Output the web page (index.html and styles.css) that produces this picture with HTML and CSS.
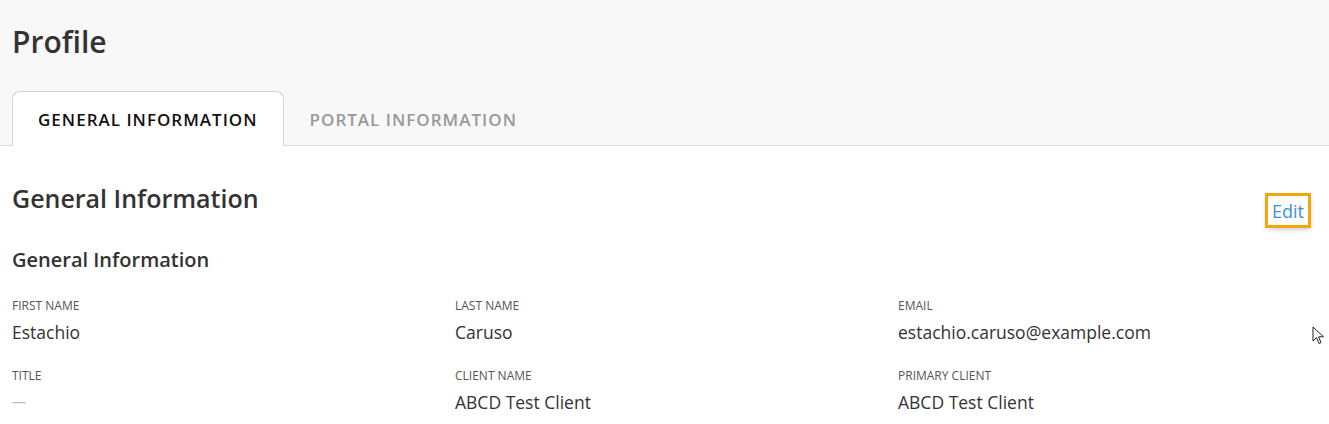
FILE: index.html
```html
<!DOCTYPE html>
<html lang="en">
<head>
    <meta charset="UTF-8">
    <meta name="viewport" content="width=device-width, initial-scale=1.0">
    <title>Profile</title>
    <link rel="stylesheet" href="styles.css">
</head>
<body>

    <!-- Page header with tabs -->
    <div class="page-header">
        <h1>Profile</h1>
        <div class="tabs">
            <div class="tab active">General Information</div>
            <div class="tab">Portal Information</div>
        </div>
    </div>

    <div class="content">
        <div class="section-head">
            <h2>General Information</h2>
            <a href="#" class="edit-link">Edit</a>
        </div>

        <h3>General Information</h3>

        <div class="fields">
            <div class="field">
                <div class="field-label">First Name</div>
                <div class="field-value">Estachio</div>
            </div>
            <div class="field">
                <div class="field-label">Last Name</div>
                <div class="field-value">Caruso</div>
            </div>
            <div class="field">
                <div class="field-label">Email</div>
                <div class="field-value">estachio.caruso@example.com</div>
            </div>
            <div class="field">
                <div class="field-label">Title</div>
                <div class="field-value empty">&mdash;</div>
            </div>
            <div class="field">
                <div class="field-label">Client Name</div>
                <div class="field-value">ABCD Test Client</div>
            </div>
            <div class="field">
                <div class="field-label">Primary Client</div>
                <div class="field-value">ABCD Test Client</div>
            </div>
        </div>
    </div>

    <!-- mouse pointer -->
    <svg class="cursor" width="14" height="20" viewBox="0 0 14 20">
        <path d="M1 1 L1 15 L4.5 11.5 L7 17.5 L9 16.6 L6.6 10.8 L11.5 10.8 Z" fill="#fff" stroke="#222" stroke-width="1"/>
    </svg>

</body>
</html>
```

FILE: styles.css
```css
body {
    margin: 0;
    font-family: "Open Sans", "Noto Sans", sans-serif;
    color: #333;
    background: #fff;
}

.page-header {
    background-color: #f8f8f8;
    padding: 0 12px;
    border-bottom: 1px solid #d9d9d9;
}

h1 {
    margin: 0;
    padding-top: 22px;
    font-size: 30px;
    font-weight: 600;
    line-height: 40px;
    color: #333;
}

.tabs {
    display: flex;
    margin-top: 29px;
    margin-bottom: -1px;
}

.tab {
    padding: 15px 25px 14px;
    font-size: 17px;
    font-weight: 600;
    line-height: 25px;
    letter-spacing: 1px;
    text-transform: uppercase;
    color: #999;
    border: 1px solid transparent;
    border-bottom: none;
    border-radius: 8px 8px 0 0;
}

.tab.active {
    background: #fff;
    color: #111;
    border-color: #d4d4d8;
}

.content {
    padding: 0 12px;
}

.section-head {
    display: flex;
    justify-content: space-between;
    align-items: flex-start;
    padding-top: 35px;
}

h2 {
    margin: 0;
    font-size: 25px;
    font-weight: 600;
    line-height: 34px;
}

.edit-link {
    margin-top: 15px;
    margin-right: 9px;
    padding: 3px 4px 2px;
    font-size: 18px;
    line-height: 24px;
    color: #3a8ee6;
    text-decoration: none;
    outline: 3px solid #f5a60a;
    box-shadow: 1px 3px 6px rgba(0, 0, 0, 0.35);
}

h3 {
    margin: 21px 0 0;
    font-size: 20px;
    font-weight: 600;
    line-height: 28px;
}

.fields {
    display: grid;
    grid-template-columns: 443px 443px 1fr;
    row-gap: 23px;
    margin-top: 23px;
}

.field-label {
    font-size: 12px;
    line-height: 18px;
    text-transform: uppercase;
    color: #555;
}

.field-value {
    margin-top: 5px;
    font-size: 17.5px;
    line-height: 24px;
    color: #333;
}

.field-value.empty {
    color: #bbb;
    font-size: 14px;
}

.cursor {
    position: absolute;
    left: 1312px;
    top: 326px;
}
```
